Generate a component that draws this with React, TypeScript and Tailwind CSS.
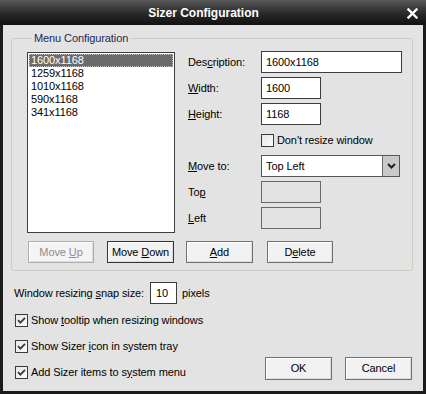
import { ReactNode } from 'react';

const font = { fontFamily: '"Liberation Sans", Arial, sans-serif' };

const Btn = ({ children, w = 'w-[66px]', h = 'h-[22px]', disabled = false, focused = false }: { children: ReactNode; w?: string; h?: string; disabled?: boolean; focused?: boolean }) => (
  <div
    className={`${w} ${h} flex items-center justify-center text-[11px] border shadow-[inset_1px_1px_0_#ffffff,inset_-1px_-1px_0_#dcdcdc] ${
      disabled
        ? 'border-[#adadad] bg-[#f4f4f4] text-[#8d8d8d]'
        : focused
          ? 'border-[#333333] bg-[#f2f2f2] text-black'
          : 'border-[#707070] bg-[#f2f2f2] text-black'
    }`}
  >
    <span>{children}</span>
  </div>
);

const CheckBox = ({ checked }: { checked: boolean }) => (
  <div className="w-[13px] h-[13px] border border-[#3a3a3a] bg-gradient-to-br from-[#e6e6e6] to-[#fbfbfb] flex items-center justify-center shrink-0">
    {checked && (
      <svg width="9" height="9" viewBox="0 0 9 9">
        <path d="M1 4.2 L3.4 6.6 L8 1.8" fill="none" stroke="#3a3a3a" strokeWidth="1.8" />
      </svg>
    )}
  </div>
);

const Field = ({ value = '', w, disabled = false }: { value?: string; w: string; disabled?: boolean }) => (
  <div
    className={`${w} h-[22px] border flex items-center pl-[4px] text-[11px] ${
      disabled ? 'border-[#6a6a6a] bg-[#e3e3e3]' : 'border-[#3c3c3c] bg-white text-black'
    }`}
  >
    {value}
  </div>
);

const items = ['1600x1168', '1259x1168', '1010x1168', '590x1168', '341x1168'];

export default function App() {
  return (
    <div className="w-[426px] h-[394px] bg-[#1c1c1c] flex flex-col text-black tracking-[-0.1px]" style={font}>
      {/* Title bar */}
      <div className="h-[25px] shrink-0 bg-gradient-to-b from-[#5a5a5a] via-[#2c2c2c] to-[#111111] flex items-center relative">
        <div className="flex-1 text-center pr-[19px] text-white font-bold text-[12px] tracking-normal">Sizer Configuration</div>
        <div className="absolute right-[8px] top-[8px]">
          <svg width="11" height="11" viewBox="0 0 11 11">
            <path d="M1.5 1.5 L9.5 9.5 M9.5 1.5 L1.5 9.5" stroke="#ffffff" strokeWidth="2.4" strokeLinecap="square" />
          </svg>
        </div>
      </div>

      {/* Body */}
      <div className="mx-[3px] mb-[3px] flex-1 bg-[#e3e3e3] flex flex-col pt-[6px] pl-[8px]">
        <fieldset className="mr-[10px] border border-[#cdcdc3] rounded-[3px] pl-[15px] pb-[7px]">
          <legend className="ml-[5px] px-[2px] text-[11px] leading-[15px] text-[#1e2850]">Menu Configuration</legend>
          <div className="flex pt-[5px]">
            <div className="w-[148px] h-[181px] border border-[#3f3f3f] bg-white mt-[1px] p-[1px] text-[11px]">
              {items.map((it, i) => (
                <div
                  key={it}
                  className={`h-[13px] leading-[13px] pl-[2px] ${
                    i === 0 ? 'bg-[#6b6b6b] text-white outline-dotted outline-1 -outline-offset-1 outline-[#bdbdbd]' : ''
                  }`}
                >
                  {it}
                </div>
              ))}
            </div>
            <div className="ml-[13px] grid grid-cols-[73px_auto] auto-rows-[22px] gap-y-[4px] items-center text-[11px]">
              <div>Des<u>c</u>ription:</div>
              <Field value="1600x1168" w="w-[141px]" />
              <div><u>W</u>idth:</div>
              <Field value="1600" w="w-[60px]" />
              <div><u>H</u>eight:</div>
              <Field value="1168" w="w-[60px]" />
              <div />
              <div className="flex items-center gap-[3px]">
                <CheckBox checked={false} />
                <span>Don't resize window</span>
              </div>
              <div><u>M</u>ove to:</div>
              <div className="w-[139px] h-[22px] border border-[#555555] bg-white flex">
                <div className="flex-1 flex items-center pl-[4px]">Top Left</div>
                <div className="w-[17px] border-l border-[#6a6a6a] bg-[#c9c9c9] flex items-center justify-center">
                  <svg width="9" height="6" viewBox="0 0 9 6">
                    <path d="M1 1 L4.5 4.5 L8 1" fill="none" stroke="#202020" strokeWidth="2" />
                  </svg>
                </div>
              </div>
              <div>To<u>p</u></div>
              <Field w="w-[60px]" disabled />
              <div><u>L</u>eft</div>
              <Field w="w-[60px]" disabled />
            </div>
          </div>
          <div className="flex mt-[8px] ml-[1px]">
            <Btn disabled>Move <u>U</u>p</Btn>
            <div className="ml-[13px]">
              <Btn focused w="w-[67px]">Move <u>D</u>own</Btn>
            </div>
            <div className="ml-[12px]">
              <Btn w="w-[67px]"><u>A</u>dd</Btn>
            </div>
            <div className="ml-[14px]">
              <Btn>D<u>e</u>lete</Btn>
            </div>
          </div>
        </fieldset>

        <div className="flex mt-[11px] pr-[11px]">
          <div className="flex-1 flex flex-col text-[11px]">
            <div className="h-[22px] flex items-center pl-[3px]">
              <span>Window resizing <u>s</u>nap size:</span>
              <div className="ml-[6px] w-[27px] h-[22px] border border-[#3c3c3c] bg-white flex items-center pl-[5px]">10</div>
              <span className="ml-[5px]">pixels</span>
            </div>
            <div className="flex flex-col gap-[4px] mt-[5px] pl-[4px]">
              <div className="h-[22px] flex items-center gap-[3px]">
                <CheckBox checked />
                <span>Show <u>t</u>ooltip when resizing windows</span>
              </div>
              <div className="h-[22px] flex items-center gap-[3px]">
                <CheckBox checked />
                <span>Show Sizer <u>i</u>con in system tray</span>
              </div>
              <div className="h-[22px] flex items-center gap-[3px]">
                <CheckBox checked />
                <span>Add Sizer items to s<u>y</u>stem menu</span>
              </div>
            </div>
          </div>
          <div className="self-end flex gap-[13px] mb-[3px]">
            <Btn w="w-[67px]" h="h-[23px]">OK</Btn>
            <Btn w="w-[67px]" h="h-[23px]">Cancel</Btn>
          </div>
        </div>
      </div>
    </div>
  );
}
